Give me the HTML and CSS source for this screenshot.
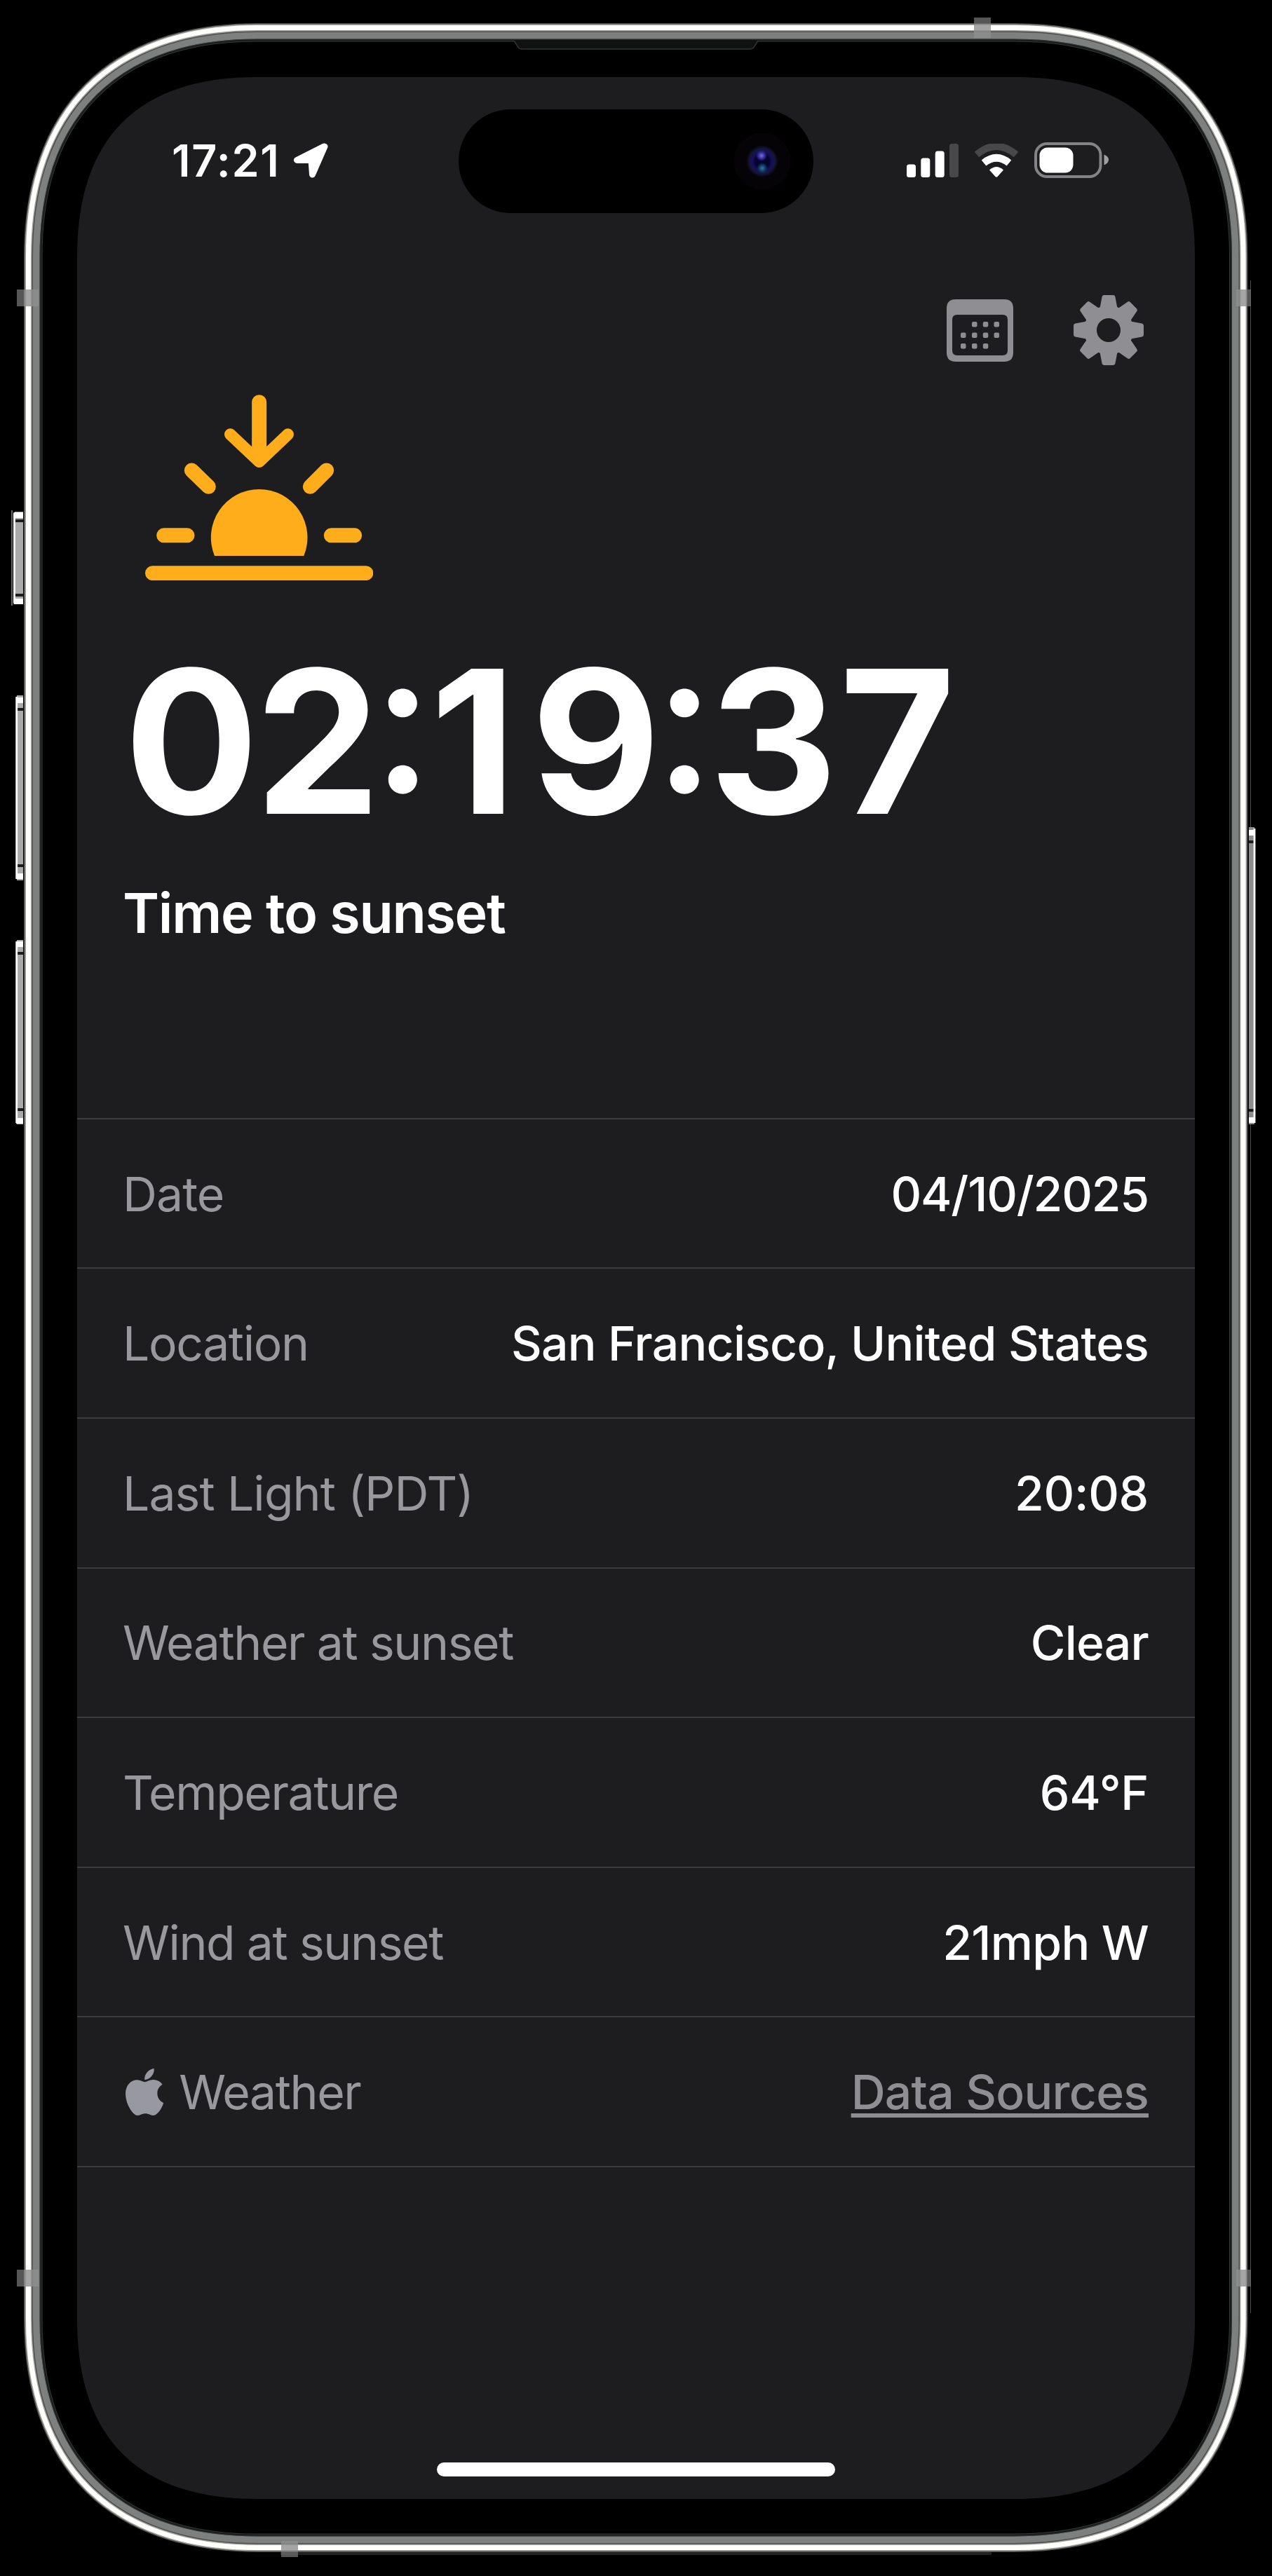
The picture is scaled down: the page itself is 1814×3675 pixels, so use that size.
FILE: index.html
```html
<!DOCTYPE html>
<html lang="en">
<head>
<meta charset="utf-8">
<title>Time to sunset</title>
<link rel="stylesheet" href="styles.css">
</head>
<body>
<div class="phone">
  <svg class="bezel" viewBox="0 0 1814 3675" aria-hidden="true">
    <defs>
      <linearGradient id="key" x1="0" x2="1" y1="0" y2="0"><stop offset="0" stop-color="#aaa"/><stop offset=".5" stop-color="#d6d6d6"/><stop offset="1" stop-color="#8c8c8c"/></linearGradient>
      <path id="rim" d="M40.500 365.500C40.500 157.600 158.600 39.500 366.500 39.500H1447C1654.900 39.500 1773 157.600 1773 365.500V3308.500C1773 3516.400 1654.900 3634.500 1447 3634.500H366.500C158.600 3634.500 40.500 3516.400 40.500 3308.500Z"/>
      <path id="band" d="M50.500 365.500C50.500 163.100 164.100 49.500 366.500 49.500H1447C1649.400 49.500 1763 163.100 1763 365.500V3308.500C1763 3510.900 1649.400 3624.500 1447 3624.500H366.500C164.100 3624.500 50.500 3510.900 50.500 3308.500Z"/>
      <path id="lip" d="M58.500 365.500C58.500 167.500 168.500 57.500 366.500 57.500H1447C1645 57.500 1755 167.500 1755 365.500V3308.500C1755 3506.500 1645 3616.500 1447 3616.500H366.500C168.500 3616.500 58.500 3506.500 58.500 3308.500Z"/>
    </defs>
    <g fill="none">
      <path d="M400 3642H1414" stroke="#222" stroke-width="6"/>
      <path d="M1783.500 400V3300" stroke="#4c4c4c" stroke-width="1"/>
      <use href="#lip" stroke="#363838" stroke-width="4"/>
      <use href="#lip" stroke="#1a1c1c" stroke-width="2"/>
      <use href="#band" stroke="#7e8080" stroke-width="12"/>
      <use href="#rim" stroke="#4c4c4a" stroke-width="13"/>
      <use href="#rim" stroke="#a3a4a2" stroke-width="10"/>
      <use href="#rim" stroke="#fffffd" stroke-width="7"/>
    </g>
    <path d="M733 57h348l-5 9q-2 4-7 4H745q-5 0-7-4Z" fill="#101111"/>
    <path d="M733 58l5 8q2 4 7 4h324q5 0 7-4l5-8" fill="none" stroke="#333" stroke-width="1.500"/>
    <g fill="url(#key)">
      <path d="M21 730h12v132H21zM24 992h9v264h-9zM24 1341h9v263h-9zM1781 1180h8v424h-8z"/>
    </g>
    <g fill="none" stroke="#1c1c1c" stroke-width="4">
      <path d="M22 743h11M22 849h11M25 1012h8M25 1235h8M25 1360h8M25 1583h8M1781 1201h7M1781 1584h7"/>
    </g>
    <g fill="none" stroke="#fff">
      <path stroke-width="1.500" stroke="#8a8a8a" d="M17 728v136"/>
      <path stroke-width="2.800" d="M20.500 732v128M23.700 994v260M23.700 1343v259M1789 1182v420"/>
      <path stroke-width="8" d="M19.500 735h13.500M19.500 858h13.500M23 999h10M23 1250h10M23 1347h10M23 1599h10M1781 1188h9M1781 1598h9"/>
    </g>
    <g fill="#8d8e8d" fill-opacity=".8">
      <path d="M34 413h21v24H34zM34 3238h21v24H34zM1763 413h15v24h-15zM1763 3238h15v24h-15zM1389 34h24v20h-24zM401 3625h24v15h-24z"/>
      <path fill="#6c6c6c" d="M24 413h10v24H24zM24 3238h10v24H24zM1778 413h6v24h-6zM1778 3238h6v24h-6zM1389 25h24v9h-24zM401 3640h24v8h-24z"/>
    </g>
  </svg>

  <main class="screen">
    <header class="status">
      <div class="status-left">
        <span class="clock">17:21</span>
        <svg class="arrow" viewBox="0 0 50 50"><path d="M44 5L5.500 24.500H26L27.500 45L45 5Z" fill="#fff" stroke="#fff" stroke-width="9" stroke-linejoin="round"/></svg>
      </div>
      <div class="island"><span class="lens"></span></div>
      <div class="status-right">
        <svg class="signal" viewBox="0 0 74 48"><g fill="#fff"><rect y="29.500" width="13" height="18.500" rx="3.500"/><rect x="20.300" y="20.500" width="13" height="27.500" rx="3.500"/><rect x="40.700" y="10.500" width="13" height="37.500" rx="3.500"/></g><rect x="61" width="13" height="48" rx="3.500" fill="#48484a"/></svg>
        <svg class="wifi" viewBox="0 0 64 48"><path d="M4 15.500Q32-8 60 15.500" fill="none" stroke="#48484a" stroke-width="10"/><path d="M14 27.500Q32 13 50 27.500" fill="none" stroke="#fff" stroke-width="10.500"/><path d="M22 37.500Q32 28.500 42 37.500L33.500 47Q32 48.500 30.500 47Z" fill="#fff"/></svg>
        <svg class="battery" viewBox="0 0 106 51"><rect x="2" y="2" width="92.500" height="47" rx="16" fill="none" stroke="#848486" stroke-width="4"/><rect x="7.500" y="7.500" width="48" height="36" rx="11.500" fill="#fff"/><path d="M99.500 17.500Q106 20 106 25T99.500 32.500Z" fill="#a0a0a2"/></svg>
      </div>
    </header>

    <nav class="toolbar">
      <svg class="calendar" viewBox="0 0 95 89"><path fill="#8e8e93" fill-rule="evenodd" d="M13 0H82Q95 0 95 13V76Q95 89 82 89H13Q0 89 0 76V13Q0 0 13 0ZM15 22Q8 22 8 29V73Q8 80 15 80H80Q87 80 87 73V29Q87 22 80 22Z"/><g fill="#8e8e93"><rect x="36" y="32" width="7.500" height="7.500" rx="2"/><rect x="51.800" y="32" width="7.500" height="7.500" rx="2"/><rect x="67.500" y="32" width="7.500" height="7.500" rx="2"/><rect x="20" y="47.500" width="7.500" height="7.500" rx="2"/><rect x="36" y="47.500" width="7.500" height="7.500" rx="2"/><rect x="51.800" y="47.500" width="7.500" height="7.500" rx="2"/><rect x="67.500" y="47.500" width="7.500" height="7.500" rx="2"/><rect x="20" y="63" width="7.500" height="7.500" rx="2"/><rect x="36" y="63" width="7.500" height="7.500" rx="2"/><rect x="51.800" y="63" width="7.500" height="7.500" rx="2"/></g></svg>
      <svg class="gear" viewBox="-50 -50 100 100">
        <defs><path id="tooth" d="M-6.500 -47H6.500L9.500 -31H-9.500Z" stroke-width="6" stroke-linejoin="round"/></defs>
        <circle r="26" fill="none" stroke="#8e8e93" stroke-width="18"/>
        <g fill="#8e8e93" stroke="#8e8e93"><use href="#tooth"/><use href="#tooth" transform="rotate(45)"/><use href="#tooth" transform="rotate(90)"/><use href="#tooth" transform="rotate(135)"/><use href="#tooth" transform="rotate(180)"/><use href="#tooth" transform="rotate(225)"/><use href="#tooth" transform="rotate(270)"/><use href="#tooth" transform="rotate(315)"/></g>
      </svg>
    </nav>

    <section class="hero">
      <svg class="sunset" viewBox="141 97 976 796">
        <g fill="none" stroke="#ffad1a" stroke-width="63" stroke-linecap="round" stroke-linejoin="round">
          <path d="M172.500 861H1085.500M221 699.500H321M937 699.500H1037M340 421L412 491M917 421L847 491M629 129V350"/>
          <path stroke-width="50" d="M505 267L629 384L752 267"/>
        </g>
        <path fill="#ffad1a" d="M438 787A206.500 206.500 0 1 1 820 787Z"/>
      </svg>
      <h1 class="timer"><span class="d0">0</span><span class="d2">2</span><span class="colon">:</span><span class="d1">1</span><span class="d9">9</span><span class="colon second">:</span><span class="d3">3</span><span>7</span></h1>
      <p class="caption">Time to sunset</p>
    </section>

    <dl class="details">
      <div class="row"><dt class="loose">Date</dt><dd class="numeric">04/10/2025</dd></div>
      <div class="row"><dt>Location</dt><dd>San Francisco, United States</dd></div>
      <div class="row"><dt class="loose">Last Light (PDT)</dt><dd class="time">20:08</dd></div>
      <div class="row"><dt>Weather at sunset</dt><dd>Clear</dd></div>
      <div class="row"><dt>Temperature</dt><dd class="time">64°F</dd></div>
      <div class="row"><dt>Wind at sunset</dt><dd>21mph W</dd></div>
      <div class="row"><dt class="brand"><svg class="apple" viewBox="4 32 376.400 448" preserveAspectRatio="none"><path fill="#9898a0" d="M318.700 268.700c-.2-36.700 16.400-64.400 50-84.800-18.800-26.900-47.200-41.700-84.700-44.600-35.500-2.800-74.300 20.700-88.500 20.700-15 0-49.400-19.700-76.400-19.700C63.300 141.200 4 184.800 4 273.500q0 39.300 14.400 81.200c12.800 36.700 59 126.700 107.200 125.200 25.200-.6 43-17.900 75.800-17.900 31.800 0 48.300 17.900 76.400 17.900 48.600-.7 90.400-82.500 102.600-119.300-65.200-30.700-61.700-90-61.700-91.900zm-56.600-164.200c27.300-32.400 24.800-61.900 24-72.500-24.100 1.400-52 16.400-67.900 34.900-17.500 19.800-27.800 44.300-25.600 71.900 26.100 2 49.900-11.400 69.500-34.300z"/></svg>Weather</dt><dd><a class="sources">Data Sources</a></dd></div>
    </dl>
    <div class="home"></div>
  </main>
</div>
</body>
</html>
```
FILE: styles.css
```css
* { box-sizing: border-box; margin: 0; }

body {
  background: #000;
  color: #fff;
  font-family: Inter, "Liberation Sans", sans-serif;
}

svg { display: block; flex: none; }

.phone {
  position: relative;
  width: 1814px;
  height: 3675px;
  padding: 110px;
  overflow: hidden;
}

.bezel { position: absolute; inset: 0; width: 1814px; height: 3675px; }

.screen {
  position: relative;
  display: flex;
  flex-direction: column;
  width: 1594px;
  height: 3455px;
  padding-top: 46px;
  background: #1d1d1f;
  clip-path: path("M0 256C0 86.7 86.7 0 256 0H1338C1507.3 0 1594 86.7 1594 256V3199C1594 3368.3 1507.3 3455 1338 3455H256C86.7 3455 0 3368.3 0 3199Z");
}

/* Status bar */
.status { display: grid; grid-template-columns: 544px 506px 544px; height: 148px; align-items: center; }
.status-left { display: flex; align-items: center; gap: 18.500px; padding: 0 0 2px 135px; }
.clock { font-size: 62.800px; line-height: 64px; font-weight: 600; letter-spacing: 1.600px; }
.arrow { width: 50px; height: 50px; }
.island { display: flex; align-items: center; justify-content: flex-end; height: 148px; padding-right: 32px; border-radius: 74px; background: #000; }
.lens {
  width: 82px;
  height: 82px;
  border-radius: 50%;
  background:
    radial-gradient(circle at 40px 33px, #7a70d0 0, #2c2690 5px, transparent 8px),
    radial-gradient(circle at 41px 51px, #2f7f9a 0, #10305c 5px, transparent 8px),
    radial-gradient(circle, #04042c 0 10px, #14105c 14px, #15153c 18px, #0b0b18 21px, #050306 23px 40px, transparent 41px);
}
.status-right { display: flex; align-items: center; padding: 0 0 3px 132.500px; }
.signal { width: 74px; height: 48px; margin-right: 22px; }
.wifi { width: 64px; height: 48px; margin-right: 22px; }
.battery { width: 106px; height: 51px; }

/* Toolbar */
.toolbar { display: flex; justify-content: flex-end; align-items: center; gap: 86px; height: 100px; margin-top: 117px; padding-right: 73.500px; }
.calendar { width: 95px; height: 89px; }
.gear { width: 100px; height: 100px; }

/* Countdown */
.hero { height: 1073.800px; padding: 41.500px 66px 0 67px; }
.sunset { width: 325.300px; height: 265.300px; margin-left: 30px; }
.timer { margin-top: 88px; font-size: 284.600px; line-height: 284px; font-weight: 700; white-space: nowrap; font-kerning: none; font-feature-settings: "calt" 0; }
.d0 { letter-spacing: -5.500px; }
.d2 { letter-spacing: -11.500px; }
.d1 { letter-spacing: 21px; }
.d9 { letter-spacing: -9px; }
.d3 { letter-spacing: 2.500px; }
.colon { font-weight: 550; font-feature-settings: "case" 1; letter-spacing: -4px; }
.colon.second { letter-spacing: -8.500px; }
.caption { margin-top: 62px; font-size: 79px; line-height: 80px; font-weight: 600; letter-spacing: -1.300px; margin-left: -2px; }

/* Details list */
.details { border-top: 2px solid #3c3c3e; font-size: 67.800px; }
.row { display: flex; justify-content: space-between; align-items: center; height: 213.600px; padding: 0 66px 0 65px; border-bottom: 2px solid #3c3c3e; white-space: nowrap; line-height: 80px; }
dt { color: #98989d; letter-spacing: -1.400px; }
.loose { letter-spacing: -.9px; }
dd { font-weight: 500; letter-spacing: -.75px; }
.numeric { letter-spacing: -1.200px; }
.time { letter-spacing: -.3px; }
.brand { display: flex; align-items: center; gap: 22px; padding-left: 4px; }
.apple { width: 54.300px; height: 67px; }
.sources { color: #8e8e93; text-decoration: underline; text-decoration-thickness: 6px; text-underline-offset: 6px; text-decoration-skip-ink: none; }

.home { width: 568px; height: 20.500px; margin: auto auto 32px; border-radius: 11px; background: #fff; }
```
